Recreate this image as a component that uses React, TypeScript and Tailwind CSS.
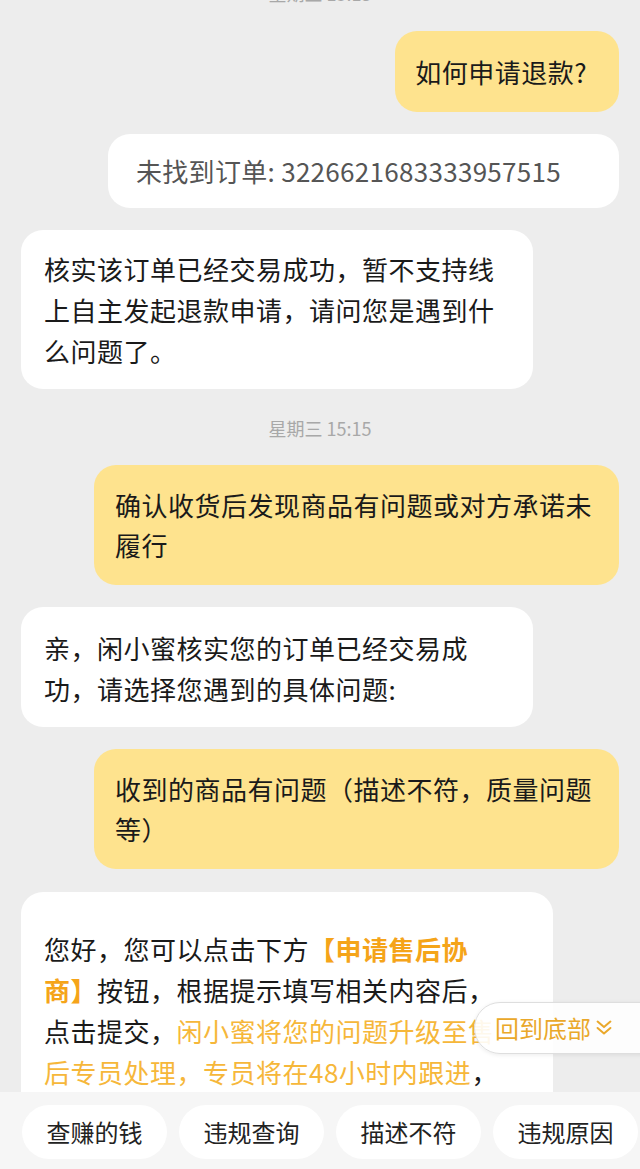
import React from 'react';

const Left: React.FC<{ w: string; pt?: string; children: React.ReactNode }> = ({ w, pt, children }) => (
  <div className="flex justify-start">
    <div className={`${w} ${pt ?? 'pt-[18px]'} bg-white rounded-[22px] pl-[23px] pr-4 pb-[18px] text-[26px] leading-[41px] tracking-[0.5px] text-[#1a1a1a]`}>
      {children}
    </div>
  </div>
);

const Right: React.FC<{ children: React.ReactNode }> = ({ children }) => (
  <div className="flex justify-end">
    <div className="w-[525px] bg-[#fee38e] rounded-[22px] pl-[21px] pr-4 py-[20px] text-[26px] leading-[40px] tracking-[0.5px] text-[#1a1a1a]">
      {children}
    </div>
  </div>
);

const chips = ['查赚的钱', '违规查询', '描述不符', '违规原因'];

const App: React.FC = () => {
  return (
    <div className="relative w-[640px] h-[1169px] overflow-hidden bg-[#ededed] flex flex-col font-['Noto_Sans_CJK_SC','Noto_Sans',sans-serif]">
      <div className="flex-1 overflow-hidden px-[21px] flex flex-col">
        <div className="mt-[-17px] h-[20px] text-center text-[18px] leading-[20px] text-[#a8a8a8]">星期三 15:13</div>

        <div className="mt-[28px] flex justify-end">
          <div className="bg-[#fee38e] rounded-[22px] pl-5 pr-[32px] py-5 text-[26px] leading-[41px] tracking-[0.5px] text-[#1a1a1a]">
            如何申请退款?
          </div>
        </div>

        <div className="mt-[22px] flex justify-end">
          <div className="w-[511px] bg-white rounded-[22px] pl-[28px] py-[19px] text-[26px] leading-[36px] tracking-[0.3px] text-[#555555]">
            未找到订单: 3226621683333957515
          </div>
        </div>

        <div className="mt-[22px]">
          <Left w="w-[512px]">
            核实该订单已经交易成功，暂不支持线
            <br />
            上自主发起退款申请，请问您是遇到什
            <br />
            么问题了。
          </Left>
        </div>

        <div className="mt-[26px] mb-[24px] h-[26px] text-center text-[18px] leading-[26px] text-[#a8a8a8]">星期三 15:15</div>

        <Right>
          确认收货后发现商品有问题或对方承诺未
          <br />
          履行
        </Right>

        <div className="mt-[22px]">
          <Left w="w-[512px]" pt="pt-[20px]">
            亲，闲小蜜核实您的订单已经交易成
            <br />
            功，请选择您遇到的具体问题:
          </Left>
        </div>

        <div className="mt-[22px]">
          <Right>
            收到的商品有问题（描述不符，质量问题
            <br />
            等）
          </Right>
        </div>

        <div className="mt-[23px]">
          <Left w="w-[532px]" pt="pt-[36px]">
            您好，您可以点击下方<span className="font-bold text-[#f5a419]">【申请售后协</span>
            <br />
            <span className="font-bold text-[#f5a419]">商】</span>按钮，根据提示填写相关内容后，
            <br />
            点击提交，<span className="text-[#f6b73a]">闲小蜜将您的问题升级至售</span>
            <br />
            <span className="text-[#f6b73a]">后专员处理，专员将在48小时内跟进</span>，
            <br />
            请您耐心等待。
          </Left>
        </div>
      </div>

      <div className="h-[77px] shrink-0 bg-[#f6f6f6] flex items-center gap-[12px] pl-[22px] pt-[2px]">
        {chips.map((c) => (
          <div key={c} className="w-[145px] h-[54px] shrink-0 rounded-full bg-white flex items-center justify-center text-[24px] text-[#222222]">
            {c}
          </div>
        ))}
      </div>

      <div className="absolute left-[474px] top-[1002px] w-[180px] h-[52px] rounded-l-full bg-white/90 border border-[#dedede] shadow-[0_1px_4px_rgba(0,0,0,0.08)] flex items-center pl-[20px] gap-[2px] text-[24px] text-[#eaa82a]">
        <span>回到底部</span>
        <svg width="22" height="22" viewBox="0 0 24 24" fill="none" stroke="#eaa82a" strokeWidth="2.2" strokeLinecap="round" strokeLinejoin="round">
          <path d="M5 5l7 6 7-6" />
          <path d="M5 12l7 6 7-6" />
        </svg>
      </div>
    </div>
  );
};

export default App;
